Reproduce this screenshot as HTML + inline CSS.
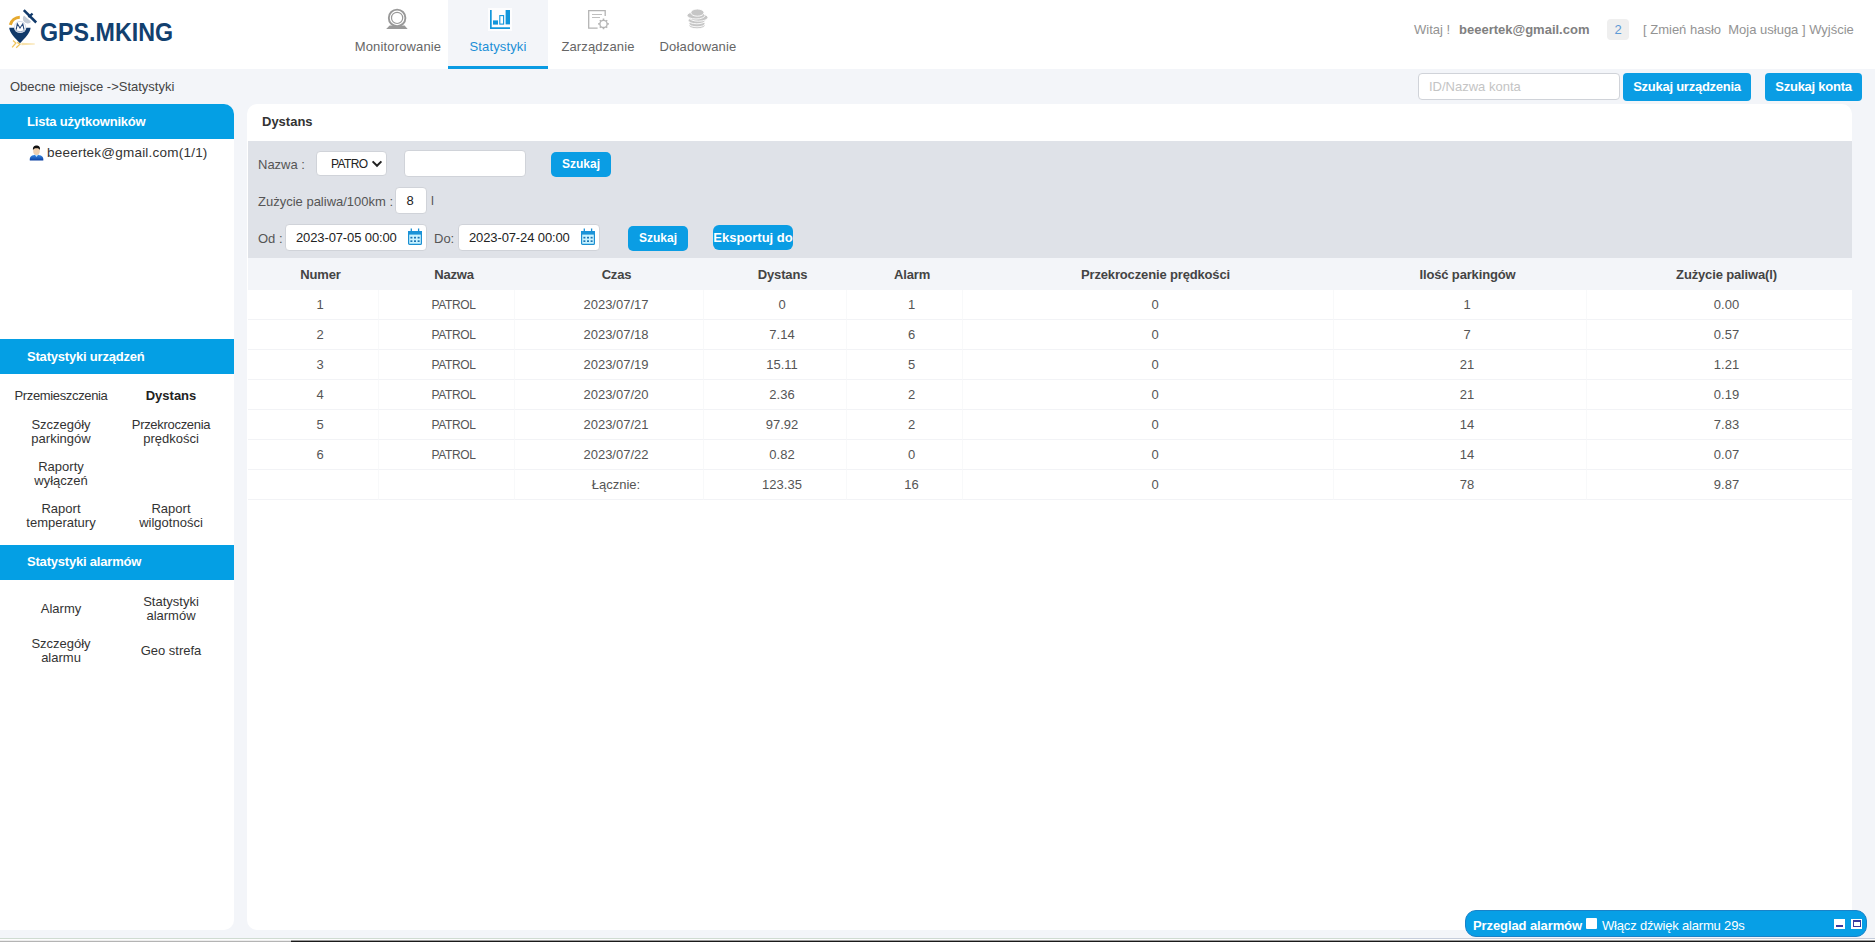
<!DOCTYPE html>
<html><head><meta charset="utf-8">
<style>
*{box-sizing:border-box;margin:0;padding:0}
html,body{width:1875px;height:942px;overflow:hidden;background:#f3f5f9;font-family:"Liberation Sans",sans-serif;font-size:13px;color:#444}
.abs{position:absolute}
#hdr{position:absolute;left:0;top:0;width:1875px;height:69px;background:#fff}
.tab{position:absolute;top:0;width:100px;height:69px;text-align:center;color:#666;font-size:13px;letter-spacing:0.15px}
.tab span{position:absolute;left:0;right:0;top:39px;line-height:16px}
.tab.act{background:#f3f5f9;color:#1b8fd6;border-bottom:3px solid #0a9be3}
#logo-t{position:absolute;left:40px;top:18px;font-weight:bold;font-size:25px;line-height:28px;color:#12406f;transform:scaleX(0.93);transform-origin:0 0;white-space:nowrap}
.hr{position:absolute;top:22px;line-height:16px;color:#939393;font-size:13px;white-space:nowrap}
.btn{position:absolute;background:#0a9de4;color:#fff;font-weight:bold;font-size:13px;border-radius:4px;text-align:center;white-space:nowrap}
#side{position:absolute;left:0;top:104px;width:234px;height:826px;background:#fff;border-radius:0 10px 10px 0}
.sh{letter-spacing:-0.2px;position:absolute;left:0;width:234px;height:35px;background:#049fe4;color:#fff;font-weight:bold;font-size:13px;line-height:35px;padding-left:27px}
.mi{position:absolute;width:110px;text-align:center;font-size:13px;line-height:14px;color:#333}
#main{position:absolute;left:247px;top:104px;width:1605px;height:826px;background:#fff;border-radius:10px}
#flt{position:absolute;left:1px;top:37px;width:1604px;height:117px;background:#dfe2e8}
.lbl{position:absolute;font-size:13px;line-height:16px;color:#555;white-space:nowrap}
.inp{position:absolute;background:#fff;border:1px solid #d0d3d9;border-radius:4px;font-size:13px;color:#333;white-space:nowrap}
table{position:absolute;left:1px;top:154px;width:1604px;border-collapse:separate;border-spacing:0;table-layout:fixed}
th{letter-spacing:-0.15px;height:32px;padding:0 0 0 14px;background:#f3f5f9;font-size:13px;color:#444;font-weight:bold;text-align:center}
td{height:30px;padding:0 0 0 14px;font-size:13px;color:#555;text-align:center;border-bottom:1px solid #f2f3f6;border-right:1px solid #f8f9fa}
td:last-child{border-right:none}
.pt{font-size:12px;letter-spacing:-0.4px}
</style></head><body>
<div id="hdr">
  <svg class="abs" style="left:0;top:0" width="60" height="60" viewBox="0 0 60 60">
<path d="M9.2 27.7 L14 27.7 A6.3 6.3 0 0 0 26.4 27.7 L30.6 27.7 C30.2 33 24.5 38.5 20 43.2 C15.5 38.5 9.6 33 9.2 27.7Z" fill="#10396a"/>
<path d="M10.3 24.9 A10 10 0 0 1 19.8 17.3" fill="none" stroke="#e6a92f" stroke-width="3"/>
<path d="M23.8 10.1 L36.2 22.5" stroke="#10396a" stroke-width="2.5" fill="none"/>
<path d="M28.4 17.2 L32.6 13.6" stroke="#10396a" stroke-width="2.2" fill="none"/>
<path d="M24 15.6 A4.4 4.4 0 0 0 31.2 21.8 Z" fill="#c3cbd6"/>
<path d="M16.2 29.6 L17.3 23.8 L20 28 L22.8 23.8 L24 29.6" fill="none" stroke="#27497a" stroke-width="1.1"/>
<path d="M15.4 30.6 Q20 33 24.8 30.6" fill="none" stroke="#8aa0c0" stroke-width="1"/><circle cx="20.1" cy="27" r="5.6" fill="none" stroke="#b7c5da" stroke-width="0.6"/>
<path d="M13 40.4 L15.9 43 L12.1 47.4" fill="none" stroke="#f0c65f" stroke-width="1.3"/>
<path d="M17.2 42.4 L20 44.2 L16.2 47.8" fill="none" stroke="#f0c65f" stroke-width="1.3"/>
<path d="M21.4 42.8 L34.8 43.6 L34.8 44.6 L21.4 45.2 Z" fill="#f8e2ab"/>
</svg>
<div id="logo-t">GPS.MKING</div>
  <div class="tab" style="left:348px"><svg class="abs" style="left:0;top:0" width="100" height="40" viewBox="348 0 100 40"><path d="M386.2 29 L389.6 25.6 L404.6 25.6 L407.6 29Z" fill="#999"/><circle cx="397.1" cy="17.9" r="8.3" fill="#fff" stroke="#999" stroke-width="1.9"/><circle cx="397.1" cy="17.9" r="5.6" fill="none" stroke="#999" stroke-width="1.2"/></svg><span>Monitorowanie</span></div>
  <div class="tab act" style="left:448px"><svg class="abs" style="left:0;top:0" width="100" height="40" viewBox="448 0 100 40"><rect x="488" y="8" width="24" height="23" fill="#fff" opacity="0.8"/><path d="M490 10 h1.7 v17.2 h18.3 v1.7 h-20Z" fill="#1296db"/><rect x="493" y="20.4" width="5" height="4.2" fill="#1296db"/><rect x="499.8" y="15.6" width="3.8" height="8.5" fill="#fff" stroke="#1296db" stroke-width="1.1"/><rect x="505.6" y="10" width="4.4" height="14.4" fill="#1296db"/></svg><span>Statystyki</span></div>
  <div class="tab" style="left:548px"><svg class="abs" style="left:0;top:0" width="100" height="40" viewBox="548 0 100 40"><path d="M605.2 16 V10.6 H588.7 V28.2 H597.6" fill="none" stroke="#b4b4b4" stroke-width="1.3"/><path d="M592 14.5 H602 M592 17.5 H600" stroke="#b8b8b8" stroke-width="0.9" fill="none"/><circle cx="603.5" cy="23.9" r="3.6" fill="#fff" stroke="#b4b4b4" stroke-width="1.3"/><g stroke="#b4b4b4" stroke-width="1.6"><path d="M603.5 18.6v1.6M603.5 27.6v1.6M598.2 23.9h1.6M607.2 23.9h1.6M599.8 20.2l1.1 1.1M606.1 26.5l1.1 1.1M599.8 27.6l1.1-1.1M606.1 21.3l1.1-1.1"/></g></svg><span>Zarządzanie</span></div>
  <div class="tab" style="left:648px"><svg class="abs" style="left:0;top:0" width="100" height="40" viewBox="648 0 100 40"><g fill="#c6c6c6" stroke="#fff" stroke-width="0.9"><ellipse cx="697" cy="25.4" rx="8" ry="3.4"/><ellipse cx="697" cy="23.6" rx="8" ry="3.2"/><ellipse cx="696.8" cy="20.4" rx="8.6" ry="3.4"/><ellipse cx="698.6" cy="17.4" rx="9.4" ry="3.8"/><ellipse cx="696" cy="15.4" rx="9" ry="3.6"/><ellipse cx="697.4" cy="12.6" rx="6.6" ry="3.6"/></g></svg><span>Doładowanie</span></div>
  <div class="hr" style="left:1414px">Witaj !</div>
  <div class="hr" style="left:1459px;font-weight:bold;color:#808080">beeertek@gmail.com</div>
  <div class="abs" style="left:1607px;top:19px;width:22px;height:21px;background:#efefef;border-radius:4px;color:#5d9ad6;font-size:13px;line-height:21px;text-align:center">2</div>
  <div class="hr" style="left:1643px">[ Zmień hasło&nbsp; Moja usługa ] Wyjście</div>
</div>
<div class="lbl" style="left:10px;top:79px;color:#444">Obecne miejsce -&gt;Statystyki</div>
<div class="inp" style="left:1418px;top:73px;width:202px;height:27px;line-height:25px;padding-left:10px;color:#c4c4c4">ID/Nazwa konta</div>
<div class="btn" style="left:1623px;top:73px;width:128px;height:28px;line-height:28px;letter-spacing:-0.25px">Szukaj urządzenia</div>
<div class="btn" style="left:1765px;top:73px;width:97px;height:28px;line-height:28px;letter-spacing:-0.25px">Szukaj konta</div>

<div id="side">
  <div class="sh" style="top:0;border-radius:0 10px 0 0">Lista użytkowników</div>
  <svg class="abs" style="left:26px;top:38px" width="22" height="22" viewBox="26 142 22 22"><defs><linearGradient id="ub" x1="0" y1="0" x2="0" y2="1"><stop offset="0" stop-color="#3d8fe8"/><stop offset="1" stop-color="#0b3fa0"/></linearGradient></defs><path d="M29.8 160.6 C29.3 156.4 31.6 155 36.5 154.4 C41.4 155 43.8 156.4 43.3 160.6 Z" fill="url(#ub)"/><path d="M34.6 154.6 L36.5 157 L38.4 154.6Z" fill="#bfe4ff"/><ellipse cx="36.5" cy="151" rx="3.3" ry="4" fill="#efd0b0"/><path d="M33 150.2 C32.6 146.2 34.6 145.4 36.5 145.4 C38.6 145.4 40.4 146.2 40 150.2 C39.4 148.6 38.6 148.2 36.5 148.2 C34.4 148.2 33.6 148.6 33 150.2Z" fill="#111"/></svg><div class="lbl" style="left:47px;top:41px;color:#333;font-size:13.5px;letter-spacing:0.22px">beeertek@gmail.com(1/1)</div>
  <div class="sh" style="top:235px">Statystyki urządzeń</div>
  <div class="mi" style="left:6px;top:285px;letter-spacing:-0.35px">Przemieszczenia</div>
  <div class="mi" style="left:116px;top:285px;font-weight:bold;color:#222">Dystans</div>
  <div class="mi" style="left:6px;top:314px">Szczegóły<br>parkingów</div>
  <div class="mi" style="left:116px;top:314px"><span style="letter-spacing:-0.3px">Przekroczenia</span><br>prędkości</div>
  <div class="mi" style="left:6px;top:356px">Raporty<br>wyłączeń</div>
  <div class="mi" style="left:6px;top:398px">Raport<br>temperatury</div>
  <div class="mi" style="left:116px;top:398px">Raport<br>wilgotności</div>
  <div class="sh" style="top:441px;line-height:33px">Statystyki alarmów</div>
  <div class="mi" style="left:6px;top:498px">Alarmy</div>
  <div class="mi" style="left:116px;top:491px">Statystyki<br>alarmów</div>
  <div class="mi" style="left:6px;top:533px">Szczegóły<br>alarmu</div>
  <div class="mi" style="left:116px;top:540px">Geo strefa</div>
</div>

<div id="main">
  <div class="lbl" style="left:15px;top:10px;font-weight:bold;color:#333">Dystans</div>
  <div id="flt">
    <div class="lbl" style="left:10px;top:16px">Nazwa :</div>
    <div class="inp" style="left:68px;top:10px;width:71px;height:25px;line-height:25px;padding-left:14px;color:#222;font-size:12px;letter-spacing:-0.6px">PATRO<svg class="abs" style="left:54px;top:7px" width="12" height="10" viewBox="0 0 12 10"><path d="M1.6 2.4 L6 6.8 L10.4 2.4" fill="none" stroke="#222" stroke-width="2"/></svg></div>
    <div class="inp" style="left:156px;top:9px;width:122px;height:27px"></div>
    <div class="btn" style="left:303px;top:11px;width:60px;height:25px;line-height:25px;font-size:12px;border-radius:5px">Szukaj</div>
    <div class="lbl" style="left:10px;top:53px">Zużycie paliwa/100km :</div>
    <div class="inp" style="left:147px;top:46px;width:32px;height:27px;line-height:25px;text-align:center;padding-right:2px;color:#222">8</div>
    <div class="lbl" style="left:183px;top:52px">l</div>
    <div class="lbl" style="left:10px;top:90px">Od :</div>
    <div class="inp" style="left:37px;top:83px;width:142px;height:27px;line-height:25px;padding-left:10px;letter-spacing:-0.12px;color:#222">2023-07-05 00:00<svg class="abs" style="left:120px;top:1px" width="18" height="20" viewBox="0 0 18 20"><rect x="2.6" y="5.6" width="12.8" height="12.8" rx="1" fill="#c9f3ff" stroke="#1a8fd2" stroke-width="1.2"/><rect x="2" y="5" width="14" height="3.6" fill="#1a93d8"/><path d="M5.3 2.4v3.4M12.6 2.4v3.4" stroke="#1a8fd2" stroke-width="1.3"/><g fill="#1c75b4"><rect x="4.4" y="10.8" width="2" height="1.7"/><rect x="8" y="10.8" width="2" height="1.7"/><rect x="11.6" y="10.8" width="2" height="1.7"/><rect x="4.4" y="14.3" width="2" height="1.7"/><rect x="8" y="14.3" width="2" height="1.7"/><rect x="11.6" y="14.3" width="2" height="1.7"/></g></svg></div>
    <div class="lbl" style="left:186px;top:90px">Do:</div>
    <div class="inp" style="left:210px;top:83px;width:142px;height:27px;line-height:25px;padding-left:10px;letter-spacing:-0.12px;color:#222">2023-07-24 00:00<svg class="abs" style="left:120px;top:1px" width="18" height="20" viewBox="0 0 18 20"><rect x="2.6" y="5.6" width="12.8" height="12.8" rx="1" fill="#c9f3ff" stroke="#1a8fd2" stroke-width="1.2"/><rect x="2" y="5" width="14" height="3.6" fill="#1a93d8"/><path d="M5.3 2.4v3.4M12.6 2.4v3.4" stroke="#1a8fd2" stroke-width="1.3"/><g fill="#1c75b4"><rect x="4.4" y="10.8" width="2" height="1.7"/><rect x="8" y="10.8" width="2" height="1.7"/><rect x="11.6" y="10.8" width="2" height="1.7"/><rect x="4.4" y="14.3" width="2" height="1.7"/><rect x="8" y="14.3" width="2" height="1.7"/><rect x="11.6" y="14.3" width="2" height="1.7"/></g></svg></div>
    <div class="btn" style="left:380px;top:85px;width:60px;height:25px;line-height:25px;font-size:12px;border-radius:5px">Szukaj</div>
    <div class="btn" style="left:465px;top:84px;width:80px;height:25px;line-height:25px;border-radius:6px">Eksportuj do</div>
  </div>
  <table>
    <colgroup><col style="width:131px"><col style="width:136px"><col style="width:189px"><col style="width:143px"><col style="width:116px"><col style="width:371px"><col style="width:253px"><col style="width:265px"></colgroup>
    <tr><th>Numer</th><th>Nazwa</th><th>Czas</th><th>Dystans</th><th>Alarm</th><th>Przekroczenie prędkości</th><th>Ilość parkingów</th><th>Zużycie paliwa(l)</th></tr>
    <tr><td>1</td><td><span class="pt">PATROL</span></td><td>2023/07/17</td><td>0</td><td>1</td><td>0</td><td>1</td><td>0.00</td></tr>
    <tr><td>2</td><td><span class="pt">PATROL</span></td><td>2023/07/18</td><td>7.14</td><td>6</td><td>0</td><td>7</td><td>0.57</td></tr>
    <tr><td>3</td><td><span class="pt">PATROL</span></td><td>2023/07/19</td><td>15.11</td><td>5</td><td>0</td><td>21</td><td>1.21</td></tr>
    <tr><td>4</td><td><span class="pt">PATROL</span></td><td>2023/07/20</td><td>2.36</td><td>2</td><td>0</td><td>21</td><td>0.19</td></tr>
    <tr><td>5</td><td><span class="pt">PATROL</span></td><td>2023/07/21</td><td>97.92</td><td>2</td><td>0</td><td>14</td><td>7.83</td></tr>
    <tr><td>6</td><td><span class="pt">PATROL</span></td><td>2023/07/22</td><td>0.82</td><td>0</td><td>0</td><td>14</td><td>0.07</td></tr>
    <tr><td></td><td></td><td>Łącznie:</td><td>123.35</td><td>16</td><td>0</td><td>78</td><td>9.87</td></tr>
  </table>
</div>

<div class="abs" id="alarm" style="left:1465px;top:910px;width:402px;height:27px;background:#079fe6;border:1px solid #1a82c8;border-radius:11px;color:#fff;font-size:13px;line-height:25px;white-space:nowrap">
  <span class="abs" style="left:7px;top:2px;font-weight:bold;letter-spacing:-0.1px">Przeglad alarmów</span>
  <span class="abs" style="left:120px;top:7px;width:11px;height:11px;background:#fff;border-radius:1px"></span>
  <span class="abs" style="left:136px;top:2px;letter-spacing:-0.18px">Włącz dźwięk alarmu 29s</span>
  <span class="abs" style="left:368px;top:8px;width:11px;height:10px;background:#fff"><i class="abs" style="left:2px;top:6px;width:7px;height:2px;background:#3b3ba0"></i></span>
  <span class="abs" style="left:385px;top:8px;width:11px;height:10px;background:#fff"><i class="abs" style="left:2px;top:1px;width:8px;height:7px;border:1.5px solid #3b3ba0;border-top-width:2px"></i></span>
</div>
<div class="abs" style="left:0;top:938px;width:1875px;height:1px;background:#cfdbd1"></div>
<div class="abs" style="left:1400px;top:938px;width:475px;height:1px;background:#c6cddb"></div>
<div class="abs" style="left:0;top:939px;width:1875px;height:1px;background:#fdfdfd"></div>
<div class="abs" style="left:0;top:940px;width:1875px;height:1px;background:#ececec"></div>
<div class="abs" style="left:0;top:941px;width:1875px;height:1px;background:#b4b4b4"></div>
<div class="abs" style="left:291px;top:940px;width:1584px;height:1px;background:#9a9a9a"></div>
<div class="abs" style="left:291px;top:941px;width:1584px;height:1px;background:#1a1a1a"></div>
</body></html>
